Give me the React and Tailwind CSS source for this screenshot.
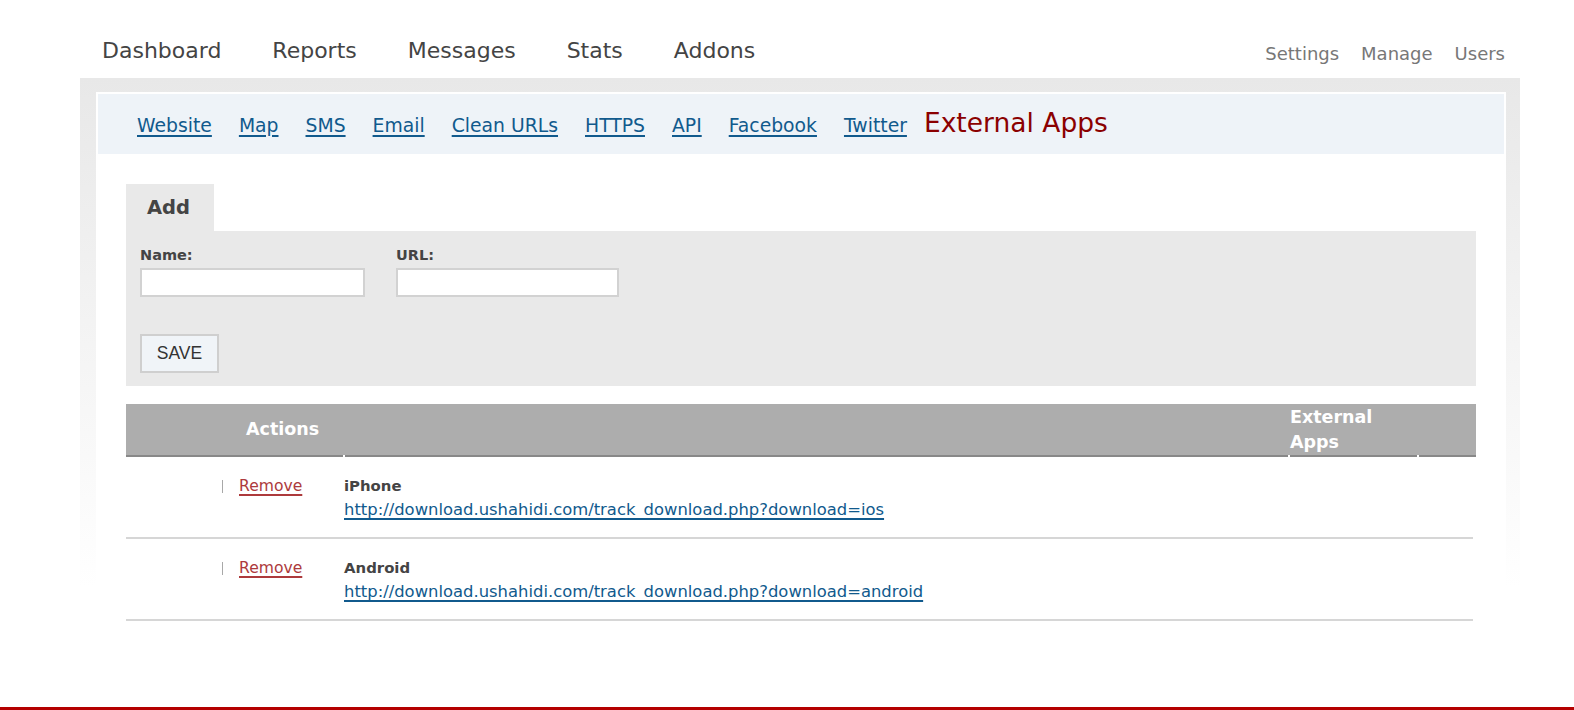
import React from "react";

const subLinks = ["Website", "Map", "SMS", "Email", "Clean URLs", "HTTPS", "API", "Facebook", "Twitter"];

const rows = [
  { name: "iPhone", url: "http://download.ushahidi.com/track_download.php?download=ios" },
  { name: "Android", url: "http://download.ushahidi.com/track_download.php?download=android" },
];

export default function App() {
  return (
    <div className="min-h-[710px] flex flex-col bg-white font-['DejaVu_Sans','Verdana',sans-serif]">
      <div className="ml-[80px] w-[1440px] flex-1">
        {/* Top nav */}
        <div className="h-[78px] flex justify-between">
          <div className="flex gap-[51px] pl-[22px] pt-[37px] text-[22px] leading-[28px] text-[#444]">
            <a>Dashboard</a>
            <a>Reports</a>
            <a>Messages</a>
            <a>Stats</a>
            <a>Addons</a>
          </div>
          <div className="flex gap-[22px] pr-[15px] pt-[42px] text-[18px] leading-[24px] text-[#777]">
            <a>Settings</a>
            <a>Manage</a>
            <a>Users</a>
          </div>
        </div>

        {/* Wrapper */}
        <div className="pt-[14px] pl-[16px] pr-[14px] bg-[linear-gradient(to_bottom,#e8e8e8_0px,#ffffff_510px)]">
          <div className="bg-white p-[2px] pb-[60px]">
            {/* Sub nav */}
            <div className="h-[60px] bg-[#eef3f8] flex items-baseline pl-[39px] pt-[14px]">
              <div className="flex items-baseline gap-[27px] text-[18.8px] leading-[26px] text-[#115a8d]">
                {subLinks.map((l) => (
                  <a key={l} className="underline underline-offset-[3px] decoration-[2px]">
                    {l}
                  </a>
                ))}
              </div>
              <span className="ml-[17px] text-[26.5px] leading-[30px] text-[#8b0000]">External Apps</span>
            </div>

            <div className="px-[28px] pt-[30px]">
              {/* Add tab */}
              <div className="w-[88px] h-[47px] bg-[#e9e9e9] flex items-center pl-[21px] text-[19.5px] font-bold text-[#444]">
                Add
              </div>
              {/* Form */}
              <div className="h-[155px] bg-[#e9e9e9] pl-[14px] pt-[15px]">
                <div className="flex gap-[31px]">
                  <div className="flex flex-col">
                    <label className="text-[14.5px] leading-[18px] font-bold text-[#444]">Name:</label>
                    <input className="mt-[4px] w-[225px] h-[29px] bg-white border-2 border-[#d2d2d2] outline-none" />
                  </div>
                  <div className="flex flex-col">
                    <label className="text-[14.5px] leading-[18px] font-bold text-[#444]">URL:</label>
                    <input className="mt-[4px] w-[223px] h-[29px] bg-white border-2 border-[#d2d2d2] outline-none" />
                  </div>
                </div>
                <button className="mt-[37px] w-[79px] h-[39px] bg-[#f0f4f8] border-2 border-[#cfcfcf] text-[17.5px] text-[#333] font-['Liberation_Sans',Arial,sans-serif]">
                  SAVE
                </button>
              </div>

              {/* Table */}
              <div className="mt-[18px]">
                <div className="bg-[#adadad] h-[51px] flex text-white font-bold text-[17.5px]">
                  <div className="w-[218px] pl-[120px] flex items-center">Actions</div>
                  <div className="w-[945px]"></div>
                  <div className="w-[128px] leading-[25px] pl-[1px] pt-[1px]">
                    External
                    <br />
                    Apps
                  </div>
                  <div className="flex-1"></div>
                </div>
                <div className="flex gap-[2px] h-[2px]">
                  <div className="w-[217px] bg-[#888]"></div>
                  <div className="w-[943px] bg-[#888]"></div>
                  <div className="w-[127px] bg-[#888]"></div>
                  <div className="flex-1 bg-[#888]"></div>
                </div>
                {rows.map((r) => (
                  <div key={r.name} className="flex mr-[3px] pt-[17px] pb-[15px] border-b-2 border-[#d6d6d6]">
                    <div className="w-[218px] flex items-start pl-[96px] leading-[24px]">
                      <span className="mt-[6px] w-[1px] h-[13px] bg-[#a8a8a8]"></span>
                      <a className="ml-[16px] text-[15.6px] text-[#ad3a3c] underline underline-offset-[3px] decoration-[2px]">
                        Remove
                      </a>
                    </div>
                    <div className="flex flex-col leading-[24px]">
                      <span className="text-[14.9px] font-bold text-[#444]">{r.name}</span>
                      <a className="text-[16.4px] text-[#115a8d] underline underline-offset-[3px] decoration-[2px]">
                        {r.url}
                      </a>
                    </div>
                  </div>
                ))}
              </div>
            </div>
          </div>
        </div>
      </div>
      <div className="h-[3px] bg-[#b40000]"></div>
    </div>
  );
}
